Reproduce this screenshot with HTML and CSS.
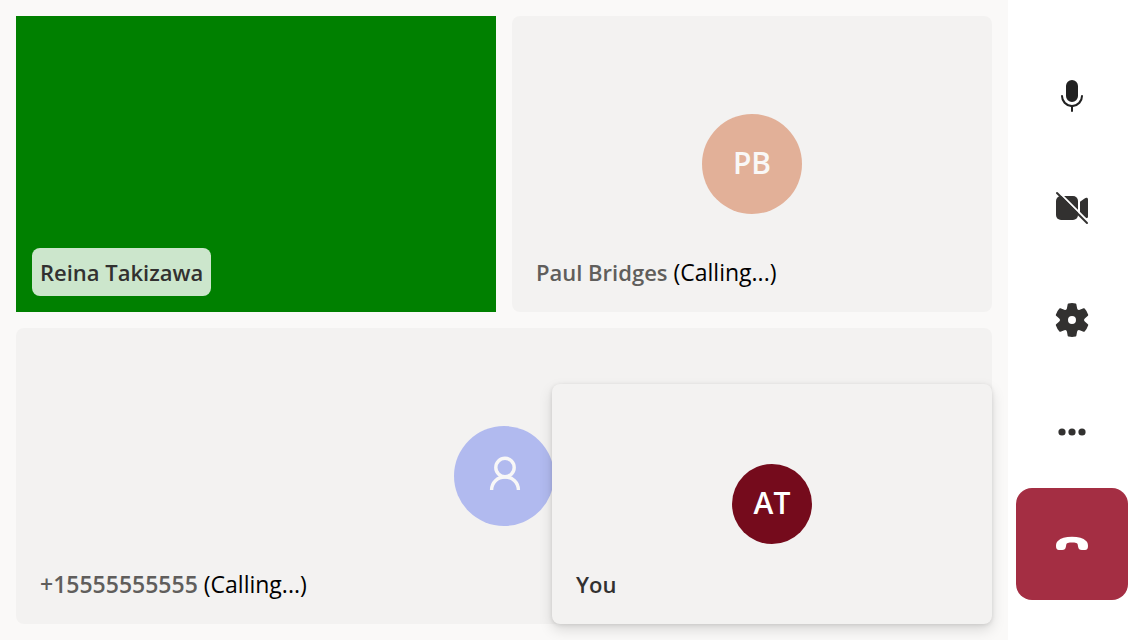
FILE: index.html
```html
<!DOCTYPE html>
<html lang="en">
<head>
<meta charset="utf-8">
<meta name="viewport" content="width=device-width, initial-scale=1">
<title>Call</title>
<link rel="stylesheet" href="styles.css">
</head>
<body>
<div class="call">
  <main class="stage">
    <section class="tile tile-video">
      <div class="label label-video"><span class="name">Reina Takizawa</span></div>
    </section>
    <section class="tile">
      <div class="avatar avatar-peach">PB</div>
      <div class="label"><span class="name name-muted">Paul Bridges</span> (Calling...)</div>
    </section>
    <section class="tile tile-wide">
      <div class="avatar avatar-blue">
        <svg class="person" viewBox="0 0 40 40" aria-hidden="true">
          <circle cx="21" cy="11.500" r="9.200"/>
          <path d="M7.600 34c0-7.500 5.800-13 13.400-13s13.400 5.500 13.400 13"/>
        </svg>
      </div>
      <div class="label"><span class="name name-muted name-number">+15555555555</span> (Calling...)</div>
    </section>
    <section class="tile tile-local">
      <div class="avatar avatar-small">AT</div>
      <div class="label"><span class="name">You</span></div>
    </section>
  </main>
  <nav class="controls" aria-label="Call controls">
    <button class="control" type="button" aria-label="Mute">
      <svg class="icon icon-mic" viewBox="0 0 20 20" aria-hidden="true">
        <path d="M13 5v5a3 3 0 1 1-6 0V5a3 3 0 0 1 6 0zM5.500 10a.5.5 0 0 0-1 0 5.500 5.500 0 0 0 5 5.480v2.020a.5.5 0 0 0 1 0v-2.020a5.500 5.500 0 0 0 5-5.480.5.5 0 0 0-1 0 4.500 4.500 0 1 1-9 0z"/>
      </svg>
    </button>
    <button class="control" type="button" aria-label="Turn on camera">
      <svg class="icon" viewBox="0 0 20 20" aria-hidden="true">
        <rect x="2" y="4" width="11" height="12" rx="2.500"/>
        <path d="M14 6.900l2.300-1.700c.3-.2.600-.3.900-.3.5 0 .8.3.8.8v8.600c0 .5-.3.800-.8.8-.3 0-.6-.1-.9-.3L14 13.100z"/>
        <path class="gap" d="M3.700 2.300l14.500 14.500"/>
        <path class="slash" d="M2.500 2.500l15 15"/>
      </svg>
    </button>
    <button class="control" type="button" aria-label="Settings">
      <svg class="icon" viewBox="0 0 20 20" aria-hidden="true">
        <path d="M1.910 7.380A8.500 8.500 0 0 1 3.700 4.300a.5.5 0 0 1 .54-.13l1.920.68a1 1 0 0 0 1.320-.76l.36-2a.5.5 0 0 1 .4-.4 8.530 8.530 0 0 1 3.550 0c.2.04.35.2.38.4l.37 2a1 1 0 0 0 1.320.76l1.920-.68a.5.5 0 0 1 .54.13 8.500 8.500 0 0 1 1.780 3.080c.06.2 0 .4-.15.54l-1.560 1.320a1 1 0 0 0 0 1.520l1.560 1.320a.5.5 0 0 1 .15.54 8.500 8.500 0 0 1-1.780 3.080.5.5 0 0 1-.54.13l-1.920-.68a1 1 0 0 0-1.320.76l-.37 2a.5.5 0 0 1-.38.4 8.530 8.530 0 0 1-3.560 0 .5.5 0 0 1-.39-.4l-.36-2a1 1 0 0 0-1.320-.76l-1.920.68a.5.5 0 0 1-.54-.13 8.500 8.500 0 0 1-1.780-3.080.5.5 0 0 1 .15-.54l1.560-1.320a1 1 0 0 0 0-1.520L2.060 7.920a.5.5 0 0 1-.15-.54zM8 10a2 2 0 1 0 4 0 2 2 0 0 0-4 0z"/>
      </svg>
    </button>
    <button class="control" type="button" aria-label="More">
      <svg class="icon" viewBox="0 0 20 20" aria-hidden="true">
        <circle cx="5" cy="10" r="1.800"/><circle cx="10" cy="10" r="1.800"/><circle cx="15" cy="10" r="1.800"/>
      </svg>
    </button>
    <button class="control control-end" type="button" aria-label="Leave">
      <svg class="icon" viewBox="0 0 40 40" aria-hidden="true">
        <path d="M20 12.800c6.500 0 11.300 1.400 14.100 4.100 1.500 1.400 1.900 3.200 1.900 5.100 0 2.700-.9 4.100-3 4.100h-3.200c-2.300 0-3.300-1-3.700-3.300l-.4-2.300c-.2-.9-.6-1.400-1.500-1.600-1.300-.4-2.700-.5-4.200-.5s-2.900.1-4.200.5c-.9.2-1.300.7-1.500 1.600l-.4 2.300c-.4 2.300-1.400 3.300-3.700 3.300H7c-2.100 0-3-1.400-3-4.100 0-1.900.4-3.700 1.900-5.100 2.800-2.700 7.600-4.100 14.100-4.100z"/>
      </svg>
    </button>
  </nav>
</div>
</body>
</html>
```

FILE: styles.css
```css
* { box-sizing: border-box; }

body {
  margin: 0;
  font-family: "Segoe UI", "Open Sans", "Noto Sans", sans-serif;
  font-size: 23px;
  line-height: 32px;
  color: #000;
}

.call {
  display: flex;
  min-height: 100vh;
  background: #faf9f8;
}

.stage {
  position: relative;
  flex: 1;
  display: grid;
  grid-template-columns: 1fr 1fr;
  grid-template-rows: 1fr 1fr;
  gap: 16px;
  padding: 16px;
}

.tile {
  position: relative;
  display: flex;
  align-items: center;
  justify-content: center;
  background: #f3f2f1;
  border-radius: 8px;
}

.tile-video {
  background: #008000;
  border-radius: 0;
}

.tile-wide { grid-column: 1 / -1; }

.tile-local {
  position: absolute;
  right: 16px;
  bottom: 16px;
  width: 440px;
  height: 240px;
  box-shadow: 0 6px 14px rgba(0, 0, 0, .13), 0 1px 4px rgba(0, 0, 0, .11);
}

.avatar {
  display: flex;
  align-items: center;
  justify-content: center;
  width: 100px;
  height: 100px;
  padding-bottom: 2px;
  border-radius: 50%;
  font-size: 30px;
  font-weight: 600;
  color: #f9f8f7;
}

.avatar-peach { background: #e2b098; }

.avatar-blue {
  padding-bottom: 0;
  background: #b1baef;
}

.avatar-small {
  width: 80px;
  height: 80px;
  background: #750b1c;
  color: #fff;
}

.person {
  width: 40px;
  height: 40px;
  fill: none;
  stroke: #f8f7f7;
  stroke-width: 3.4;
}

.label {
  position: absolute;
  left: 16px;
  bottom: 16px;
  padding: 8px;
  border-radius: 8px;
  white-space: nowrap;
}

.label-video { background: rgba(255, 255, 255, .8); }

.name {
  font-size: 22px;
  font-weight: 600;
  color: #323130;
}

.name-muted { color: #605e5c; }
.name-number { font-size: 23px; }

.controls {
  display: flex;
  flex-direction: column;
  justify-content: center;
  padding: 0 8px;
  background: #fff;
}

.control {
  display: flex;
  align-items: center;
  justify-content: center;
  width: 112px;
  height: 112px;
  padding: 0;
  border: 0;
  border-radius: 16px;
  background: none;
  color: #323130;
}

.control-end {
  background: #a42e43;
  color: #fff;
}

.icon {
  width: 40px;
  height: 40px;
  fill: currentColor;
}

.icon-mic { color: #212121; }

.gap,
.slash {
  fill: none;
  stroke: #fff;
  stroke-width: 1;
  stroke-linecap: round;
}

.slash { stroke: #323130; }
```
